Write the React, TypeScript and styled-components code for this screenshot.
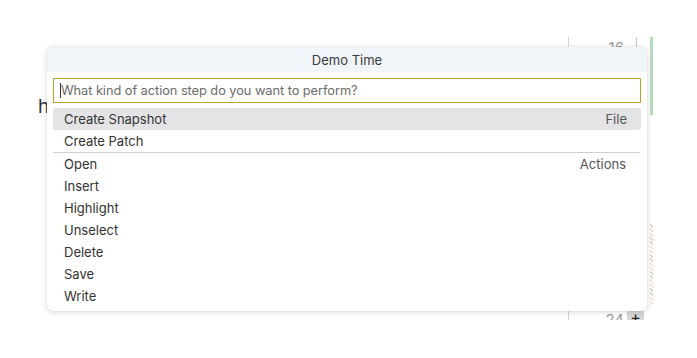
import React from "react";
import styled, { createGlobalStyle } from "styled-components";

const Global = createGlobalStyle`
  html, body { margin: 0; padding: 0; background: #ffffff; }
  body { font-family: Inter, "Noto Sans", sans-serif; width: 697px; height: 358px; overflow: hidden; }
`;

const Stage = styled.div`
  position: relative;
  width: 697px;
  height: 358px;
`;

const Editor = styled.div`
  display: flex;
  box-sizing: border-box;
  padding-top: 37px;
  height: 320px;
  overflow: hidden;
`;

const TextArea = styled.div`
  flex: 0 0 569px;
  box-sizing: border-box;
  padding: 58px 0 0 38px;
  font-size: 19px;
  color: #333;
  border-right: 1px solid #d4d4d4;
`;

const Numbers = styled.div`
  flex: 0 0 55px;
  display: flex;
  flex-direction: column;
  justify-content: space-between;
  align-items: flex-end;
  padding: 3px 12px 0 0;
  margin-bottom: -8px;
  font-size: 15px;
  color: #9a9a9a;
  line-height: 16px;
`;

const Gutter = styled.div`
  flex: 0 0 14px;
  display: flex;
  flex-direction: column;
  justify-content: space-between;
`;

const GutterTop = styled.div`
  width: 1px;
  height: 12px;
  background: #c8c8c8;
`;

const PlusBox = styled.div`
  width: 17px;
  height: 9px;
  margin-left: -9px;
  background: #d8d8d8;
  color: #222;
  font-size: 16px;
  line-height: 12px;
  text-align: center;
  overflow: hidden;
`;

const Scroll = styled.div`
  flex: 0 0 3px;
  display: flex;
  flex-direction: column;
`;

const GreenMark = styled.div`
  height: 78px;
  background: #b7dcbc;
`;

const Hatch = styled.div`
  margin-top: 109px;
  height: 82px;
  background: repeating-linear-gradient(45deg, #e6d3b8 0 1px, #ffffff 1px 3px);
`;

const Palette = styled.div`
  position: absolute;
  left: 47px;
  top: 47px;
  width: 600px;
  height: 264px;
  background: #ffffff;
  border-radius: 6px;
  box-shadow: 0 1px 6px rgba(0, 0, 0, 0.16), 0 0 1px rgba(0, 0, 0, 0.12);
  overflow: hidden;
  display: flex;
  flex-direction: column;
  color: #333333;
  font-size: 13px;
`;

const Title = styled.div`
  height: 25px;
  line-height: 26px;
  text-align: center;
  background: #f0f5f9;
  color: #3a3a3a;
`;

const InputRow = styled.div`
  padding: 6px 6px 5px 6px;
`;

const Input = styled.div`
  box-sizing: border-box;
  height: 25px;
  border: 1px solid #b8a42a;
  background: #fffffd;
  display: flex;
  align-items: center;
  padding-left: 6px;
  color: #6b6b6b;
  font-size: 12.8px;
  letter-spacing: -0.05px;
`;

const Caret = styled.span`
  display: inline-block;
  width: 1px;
  height: 15px;
  background: #333;
`;

const List = styled.div`
  padding: 0 6px;
  display: flex;
  flex-direction: column;
`;

const Row = styled.div<{ $active?: boolean; $sep?: boolean }>`
  display: flex;
  justify-content: space-between;
  align-items: center;
  height: 22px;
  padding: 0 14px 0 11px;
  border-radius: 3px;
  background: ${(p) => (p.$active ? "#e4e4e6" : "transparent")};
  border-top: ${(p) => (p.$sep ? "1px solid #cfcfcf" : "none")};
  ${(p) => (p.$sep ? "border-radius: 0; margin-right: 1px;" : "")}
`;

const Label = styled.span`
  color: #333;
`;

const Group = styled.span`
  color: #555;
`;

const items: { label: string; group?: string; active?: boolean; sep?: boolean }[] = [
  { label: "Create Snapshot", group: "File", active: true },
  { label: "Create Patch" },
  { label: "Open", group: "Actions", sep: true },
  { label: "Insert" },
  { label: "Highlight" },
  { label: "Unselect" },
  { label: "Delete" },
  { label: "Save" },
  { label: "Write" },
];

export default function App() {
  return (
    <Stage>
      <Global />
      <Editor>
        <TextArea>h</TextArea>
        <Numbers>
          <span>16</span>
          <span>24</span>
        </Numbers>
        <Gutter>
          <GutterTop />
          <PlusBox>+</PlusBox>
        </Gutter>
        <Scroll>
          <GreenMark />
          <Hatch />
        </Scroll>
      </Editor>
      <Palette>
        <Title>Demo Time</Title>
        <InputRow>
          <Input>
            <Caret />
            What kind of action step do you want to perform?
          </Input>
        </InputRow>
        <List>
          {items.map((it) => (
            <Row key={it.label} $active={it.active} $sep={it.sep}>
              <Label>{it.label}</Label>
              {it.group && <Group>{it.group}</Group>}
            </Row>
          ))}
        </List>
      </Palette>
    </Stage>
  );
}
